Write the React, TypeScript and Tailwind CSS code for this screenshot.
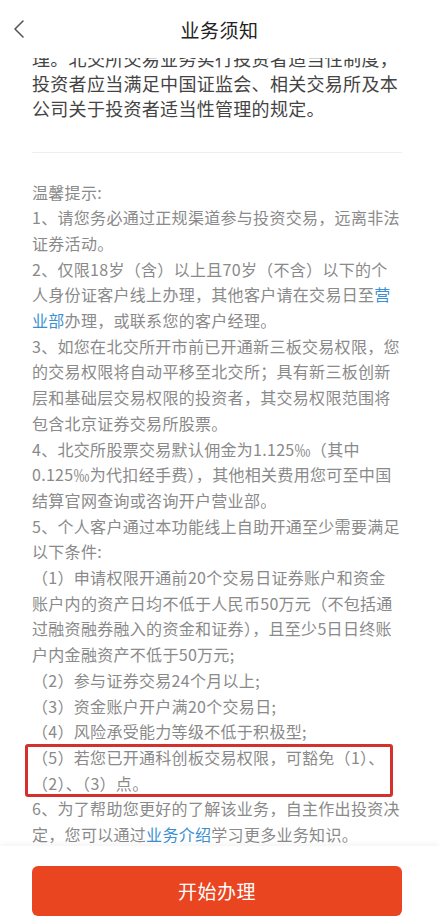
const topLines = [
  "理。北交所交易业务实行投资者适当性制度，",
  "投资者应当满足中国证监会、相关交易所及本",
  "公司关于投资者适当性管理的规定。",
];

type Part = string | { link: string };

const tips: Part[][] = [
  ["温馨提示:"],
  ["1、请您务必通过正规渠道参与投资交易，远离非法"],
  ["证券活动。"],
  ["2、仅限18岁（含）以上且70岁（不含）以下的个"],
  ["人身份证客户线上办理，其他客户请在交易日至", { link: "营" }],
  [{ link: "业部" }, "办理，或联系您的客户经理。"],
  ["3、如您在北交所开市前已开通新三板交易权限，您"],
  ["的交易权限将自动平移至北交所；具有新三板创新"],
  ["层和基础层交易权限的投资者，其交易权限范围将"],
  ["包含北京证券交易所股票。"],
  ["4、北交所股票交易默认佣金为1.125‰（其中"],
  ["0.125‰为代扣经手费），其他相关费用您可至中国"],
  ["结算官网查询或咨询开户营业部。"],
  ["5、个人客户通过本功能线上自助开通至少需要满足"],
  ["以下条件:"],
  ["（1）申请权限开通前20个交易日证券账户和资金"],
  ["账户内的资产日均不低于人民币50万元（不包括通"],
  ["过融资融券融入的资金和证券），且至少5日日终账"],
  ["户内金融资产不低于50万元;"],
  ["（2）参与证券交易24个月以上;"],
  ["（3）资金账户开户满20个交易日;"],
  ["（4）风险承受能力等级不低于积极型;"],
];

const afterBox: Part[][] = [
  ["6、为了帮助您更好的了解该业务，自主作出投资决"],
  ["定，您可以通过", { link: "业务介绍" }, "学习更多业务知识。"],
];

function Line({ parts }: { parts: Part[] }) {
  return (
    <div className="whitespace-nowrap">
      {parts.map((p, i) =>
        typeof p === "string" ? (
          <span key={i}>{p}</span>
        ) : (
          <span key={i} className="text-[#3a8fd3]">
            {p.link}
          </span>
        )
      )}
    </div>
  );
}

export default function App() {
  return (
    <div className="w-[439px] h-[920px] flex flex-col overflow-hidden bg-white font-['Noto_Sans_CJK_SC',sans-serif]">
      {/* header */}
      <div className="h-[58px] shrink-0 relative z-10 bg-white flex items-center justify-center">
        <svg
          className="absolute left-[10px] top-[16px]"
          width="20"
          height="26"
          viewBox="0 0 20 26"
          fill="none"
        >
          <polyline points="13,5 5,13 13,21" stroke="#555" strokeWidth="1.6" strokeLinecap="round" strokeLinejoin="round" />
        </svg>
        <span className="mt-[3px] text-[19px] text-[#222] tracking-[0.5px]">业务须知</span>
      </div>

      {/* content, scrolled a little */}
      <div className="flex-1 min-h-0 overflow-hidden">
        <div className="-mt-[12.5px] pl-[32px] w-[402px]">
          <div className="text-[18px] leading-[25px] text-[#444] tracking-[0.3px]">
            {topLines.map((l) => (
              <div key={l} className="whitespace-nowrap">
                {l}
              </div>
            ))}
          </div>

          <div className="mt-[31px] h-px bg-[#efefef]" />

          <div className="mt-[27px] text-[16px] leading-[25.7px] text-[#8a8a8a] tracking-[0.3px]">
            {tips.map((parts, i) => (
              <Line key={i} parts={parts} />
            ))}
            <div className="relative">
              <Line parts={["（5）若您已开通科创板交易权限，可豁免（1）、"]} />
              <Line parts={["（2）、（3）点。"]} />
              <div className="absolute -top-[1px] -bottom-[1px] -left-[7px] right-[9px] border-[3px] border-[#d6302c] rounded-[3px]" />
            </div>
            {afterBox.map((parts, i) => (
              <Line key={i} parts={parts} />
            ))}
          </div>
        </div>
      </div>

      {/* bottom bar */}
      <div className="h-[74px] shrink-0 bg-white shadow-[0_-2px_6px_rgba(0,0,0,0.05)] pt-[20px] pl-[32px]">
        <button className="w-[370px] h-[50px] rounded-[6px] bg-[#ea4521] text-white text-[19px] tracking-[0.5px] flex items-center justify-center">
          开始办理
        </button>
      </div>
    </div>
  );
}
